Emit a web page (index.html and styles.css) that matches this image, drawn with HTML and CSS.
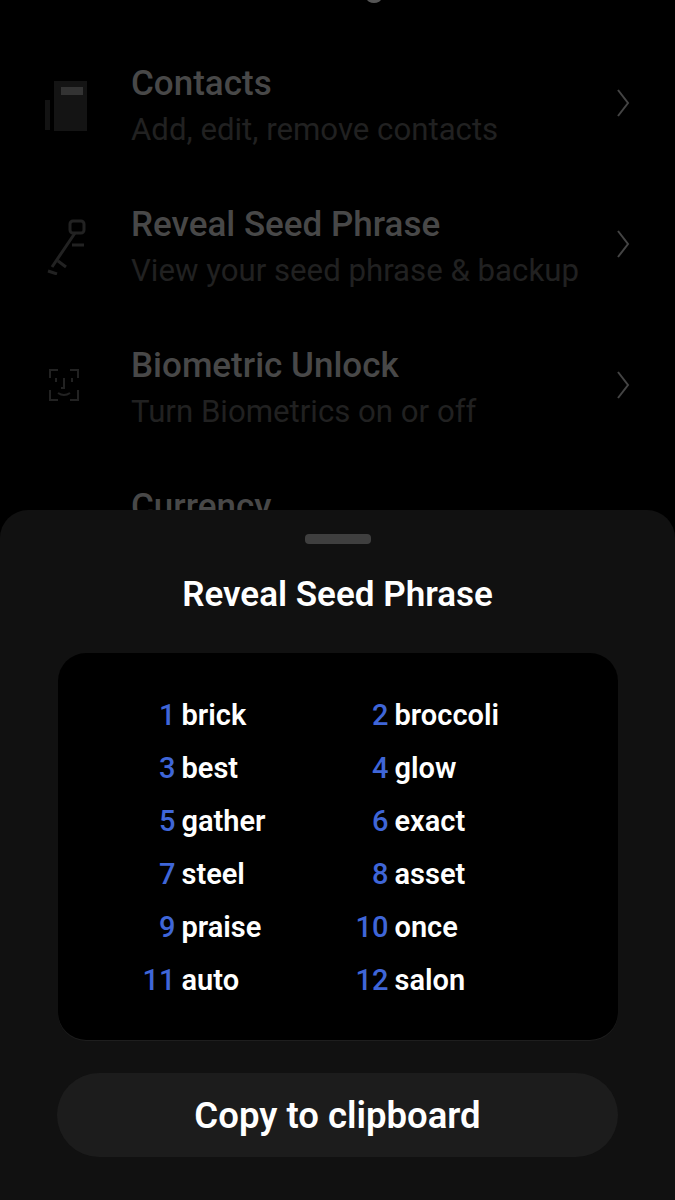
FILE: index.html
```html
<!DOCTYPE html>
<html lang="en">
<head>
    <meta charset="UTF-8">
    <meta name="viewport" content="width=device-width, initial-scale=1.0">
    <title>Reveal Seed Phrase</title>
    <link rel="stylesheet" href="styles.css">
</head>
<body>
    <main class="settings">
        <span class="top-clip"></span>
        <div class="row">
            <svg class="row-icon" viewBox="0 0 48 56"><path d="M1 22h5v30H1z" fill="#131313"/><path d="M10 3h33v50H10z" fill="#141414"/><path d="M17 9h22v8H17z" fill="#333"/></svg>
            <div class="row-text">
                <h2>Contacts</h2>
                <p>Add, edit, remove contacts</p>
            </div>
            <svg class="chevron" viewBox="0 0 14 30"><path d="M2 2l10 13L2 28"/></svg>
        </div>
        <div class="row">
            <svg class="row-icon" viewBox="0 0 48 56"><g fill="none" stroke="#222" stroke-width="3"><rect x="26" y="2" width="14" height="12" rx="3"/><path d="M31 14L8 48M4 52l9 3M14 42l8 6M28 26h12"/></g></svg>
            <div class="row-text">
                <h2>Reveal Seed Phrase</h2>
                <p>View your seed phrase &amp; backup</p>
            </div>
            <svg class="chevron" viewBox="0 0 14 30"><path d="M2 2l10 13L2 28"/></svg>
        </div>
        <div class="row">
            <svg class="row-icon" viewBox="0 0 48 56"><g fill="none" stroke="#222" stroke-width="2"><path d="M6 18v-8h8M26 10h8v8M6 30v10h8M26 40h8V30M12 18v4M28 18v4M20 18v10h-3M14 33q6 4 12 0"/></g></svg>
            <div class="row-text">
                <h2>Biometric Unlock</h2>
                <p>Turn Biometrics on or off</p>
            </div>
            <svg class="chevron" viewBox="0 0 14 30"><path d="M2 2l10 13L2 28"/></svg>
        </div>
        <div class="row">
            <span class="row-icon"></span>
            <div class="row-text">
                <h2>Currency</h2>
                <p>&nbsp;</p>
            </div>
        </div>
    </main>

    <section class="sheet">
        <div class="handle"></div>
        <h1>Reveal Seed Phrase</h1>
        <div class="phrase">
            <span class="num">1</span><span class="word">brick</span><span class="num">2</span><span class="word">broccoli</span>
            <span class="num">3</span><span class="word">best</span><span class="num">4</span><span class="word">glow</span>
            <span class="num">5</span><span class="word">gather</span><span class="num">6</span><span class="word">exact</span>
            <span class="num">7</span><span class="word">steel</span><span class="num">8</span><span class="word">asset</span>
            <span class="num">9</span><span class="word">praise</span><span class="num">10</span><span class="word">once</span>
            <span class="num">11</span><span class="word">auto</span><span class="num">12</span><span class="word">salon</span>
        </div>
        <button class="copy">Copy to clipboard</button>
    </section>
</body>
</html>
```
FILE: styles.css
```css
*, *::before, *::after{
    box-sizing: border-box;
    margin: 0;
    padding: 0;
}

html, body{
    height: 1200px;
    overflow: hidden;
}

body{
    position: relative;
    background: #000;
    font-family: Roboto, "Liberation Sans", sans-serif;
}

.settings{
    padding: 47px 44px 0 44px;
}

.top-clip{
    position: absolute;
    top: -5px;
    left: 367px;
    width: 14px;
    height: 8px;
    border-radius: 50%;
    background: #555;
}

.row{
    display: flex;
    align-items: center;
    height: 141px;
    padding-bottom: 24px;
}

.row-icon{
    width: 48px;
    height: 56px;
    margin-right: 39px;
    flex: none;
}

.row-text{
    flex: 1;
}

.row-text h2{
    padding-top: 2px;
    font-size: 35px;
    line-height: 42px;
    font-weight: 500;
    color: #484848;
}

.row-text p{
    margin-top: 5px;
    font-size: 31.2px;
    line-height: 40px;
    color: #212121;
}

.chevron{
    width: 14px;
    height: 30px;
    margin-right: 1px;
    margin-bottom: 5px;
    fill: none;
    stroke: #444;
    stroke-width: 2;
}

.sheet{
    position: absolute;
    left: 0;
    right: 0;
    top: 510px;
    bottom: 0;
    display: flex;
    flex-direction: column;
    align-items: center;
    background: #111;
    border-radius: 28px 28px 0 0;
}

.handle{
    width: 66px;
    height: 10px;
    margin-top: 24px;
    border-radius: 4px;
    background: #3f3f3f;
}

.sheet h1{
    margin-top: 26px;
    font-size: 35px;
    line-height: 50px;
    font-weight: 600;
    color: #fff;
}

.phrase{
    display: grid;
    grid-template-columns: 118px 84px 117px auto;
    grid-auto-rows: 53px;
    column-gap: 6px;
    align-items: center;
    justify-content: start;
    width: 560px;
    height: 387px;
    margin-top: 33px;
    padding-top: 35px;
    border-radius: 28px;
    background: #000;
    box-shadow: 0 1px 0 #1e1e1e;
    font-size: 29px;
    font-weight: 600;
}

.num{
    text-align: right;
    font-weight: 500;
    color: #3f66d8;
}

.word{
    color: #fff;
}

.copy{
    width: 561px;
    height: 84px;
    margin-top: 33px;
    border: 0;
    border-radius: 42px;
    background: #1c1c1c;
    color: #fff;
    font-family: inherit;
    font-size: 36.5px;
    font-weight: 600;
}
```
